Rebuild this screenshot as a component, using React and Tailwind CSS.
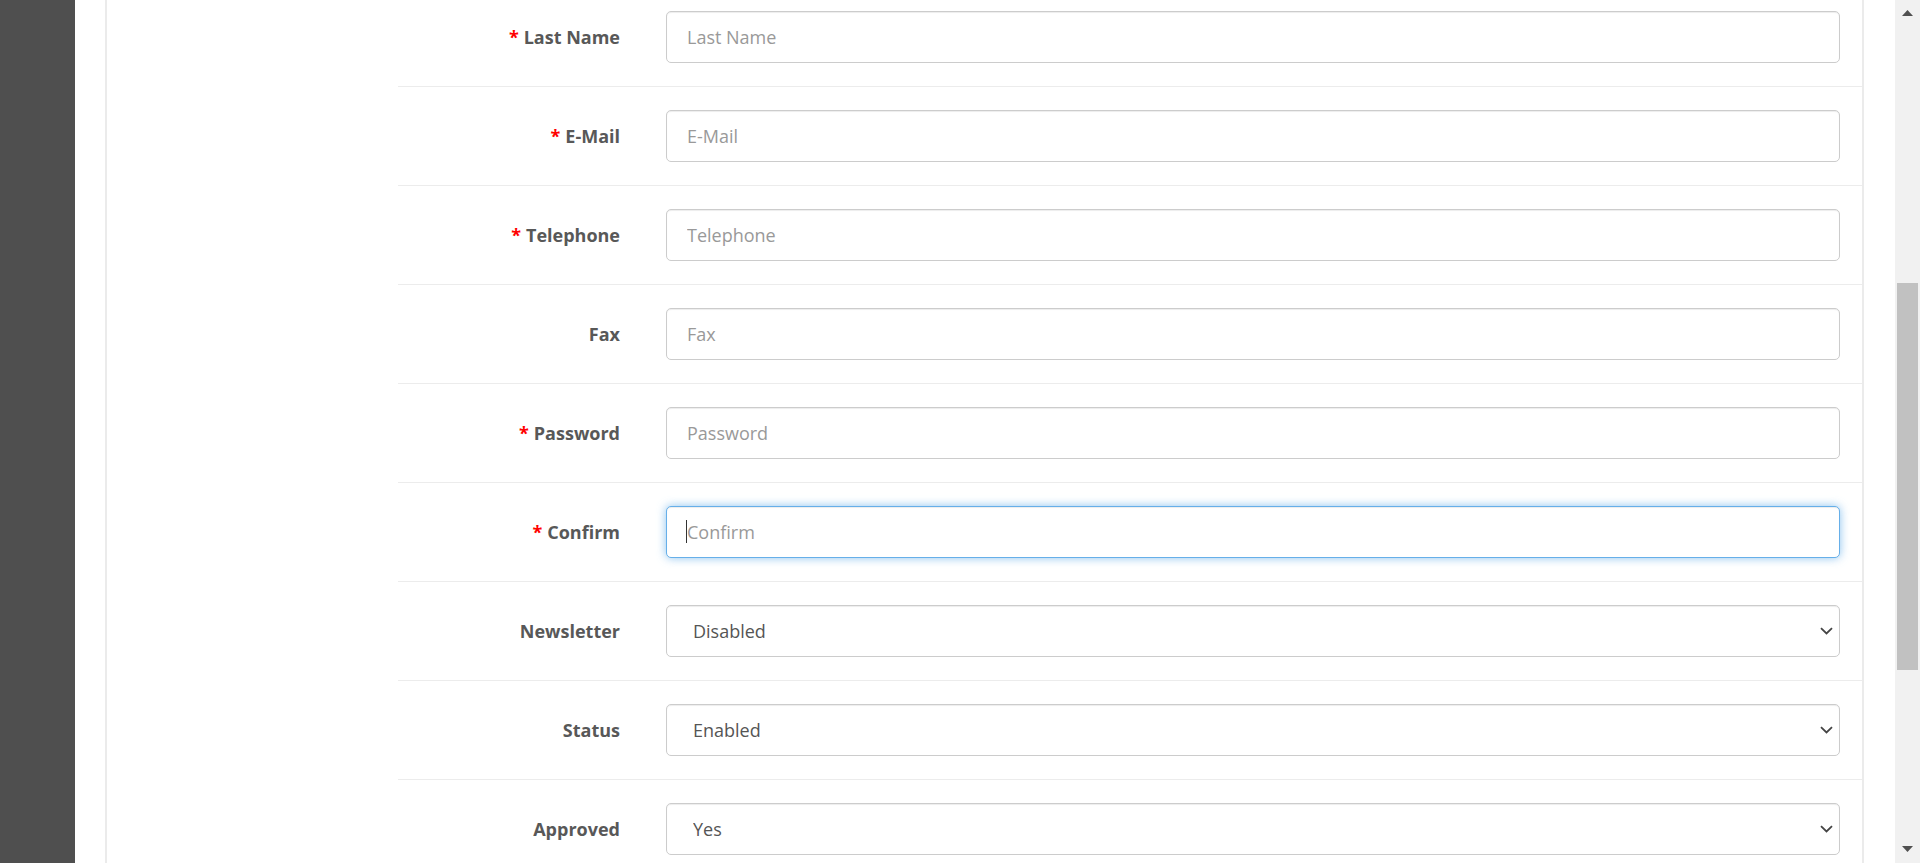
import React from 'react';

const ROWS = [
  { label: 'Last Name', required: true, type: 'text' },
  { label: 'E-Mail', required: true, type: 'text' },
  { label: 'Telephone', required: true, type: 'text' },
  { label: 'Fax', type: 'text' },
  { label: 'Password', required: true, type: 'password' },
  { label: 'Confirm', required: true, type: 'password', focused: true },
  { label: 'Newsletter', type: 'select', value: 'Disabled', options: ['Enabled', 'Disabled'] },
  { label: 'Status', type: 'select', value: 'Enabled', options: ['Enabled', 'Disabled'] },
  { label: 'Approved', type: 'select', value: 'Yes', options: ['Yes', 'No'] },
];

function Chevron() {
  return (
    <svg width="13" height="8" viewBox="0 0 13 8" className="pointer-events-none absolute right-[7px] top-1/2 -translate-y-1/2">
      <path d="M1 1.2 L6.5 6.4 L12 1.2" fill="none" stroke="#444" strokeWidth="1.8" />
    </svg>
  );
}

function Field({ row }) {
  const base = 'h-[52px] w-full rounded-[5px] border bg-white text-[18px] outline-none';
  if (row.type === 'select') {
    return (
      <div className="relative">
        <select
          defaultValue={row.value}
          className={`${base} appearance-none border-[#cccccc] pl-[26px] text-[#555] shadow-[inset_0_1px_1px_rgba(0,0,0,0.075)]`}
        >
          {row.options.map(o => <option key={o}>{o}</option>)}
        </select>
        <Chevron />
      </div>
    );
  }
  if (row.focused) {
    return (
      <div className="relative">
        <input
          type={row.type}
          placeholder={row.label}
          className={`${base} border-[#66afe9] pl-[20px] text-[#555] placeholder:text-[#999] shadow-[inset_0_1px_1px_rgba(0,0,0,0.075),0_0_10px_rgba(102,175,233,0.75)]`}
        />
        {/* text caret */}
        <span className="absolute left-[20px] top-[14px] h-[23px] w-px bg-[#333]" />
      </div>
    );
  }
  return (
    <input
      type={row.type}
      placeholder={row.label}
      className={`${base} border-[#cccccc] pl-[20px] text-[#555] placeholder:text-[#999] shadow-[inset_0_1px_1px_rgba(0,0,0,0.075)]`}
    />
  );
}

export default function App() {
  return (
    <div className="flex h-[863px] w-[1920px] overflow-hidden bg-white font-['Open_Sans',sans-serif]">
      {/* dark side column */}
      <div className="w-[75px] shrink-0 bg-[#4f4f4f]" />

      <div className="flex flex-1 pl-[30px] pr-[31px]">
        <div className="flex flex-1 border-x-2 border-[#ebebeb]">
          <div className="w-[291px] shrink-0" />
          <div className="flex-1">
            {ROWS.map((row, i) => (
              <div
                key={row.label}
                className={`flex items-center pb-[23px] ${i === 0 ? 'pt-[11px]' : 'border-t border-[#ececec] pt-[23px]'}`}
              >
                <label className="w-[268px] shrink-0 pr-[46px] text-right text-[18px] font-bold text-[#585858]">
                  {row.required && <span className="mr-[5px] text-[#ff0000]">*</span>}
                  {row.label}
                </label>
                <div className="flex-1 pr-[22px]">
                  <Field row={row} />
                </div>
              </div>
            ))}
          </div>
        </div>
      </div>

      {/* scrollbar */}
      <div className="flex w-[25px] shrink-0 flex-col items-center bg-[#f1f1f1]">
        <div className="flex h-[26px] items-center justify-center">
          <svg width="11" height="6" viewBox="0 0 11 6"><path d="M0 6 L5.5 0 L11 6 Z" fill="#505050" /></svg>
        </div>
        <div className="mt-[257px] h-[387px] w-[21px] bg-[#c1c1c1]" />
        <div className="flex-1" />
        <div className="flex h-[28px] items-center justify-center">
          <svg width="11" height="6" viewBox="0 0 11 6"><path d="M0 0 L5.5 6 L11 0 Z" fill="#505050" /></svg>
        </div>
      </div>
    </div>
  );
}
